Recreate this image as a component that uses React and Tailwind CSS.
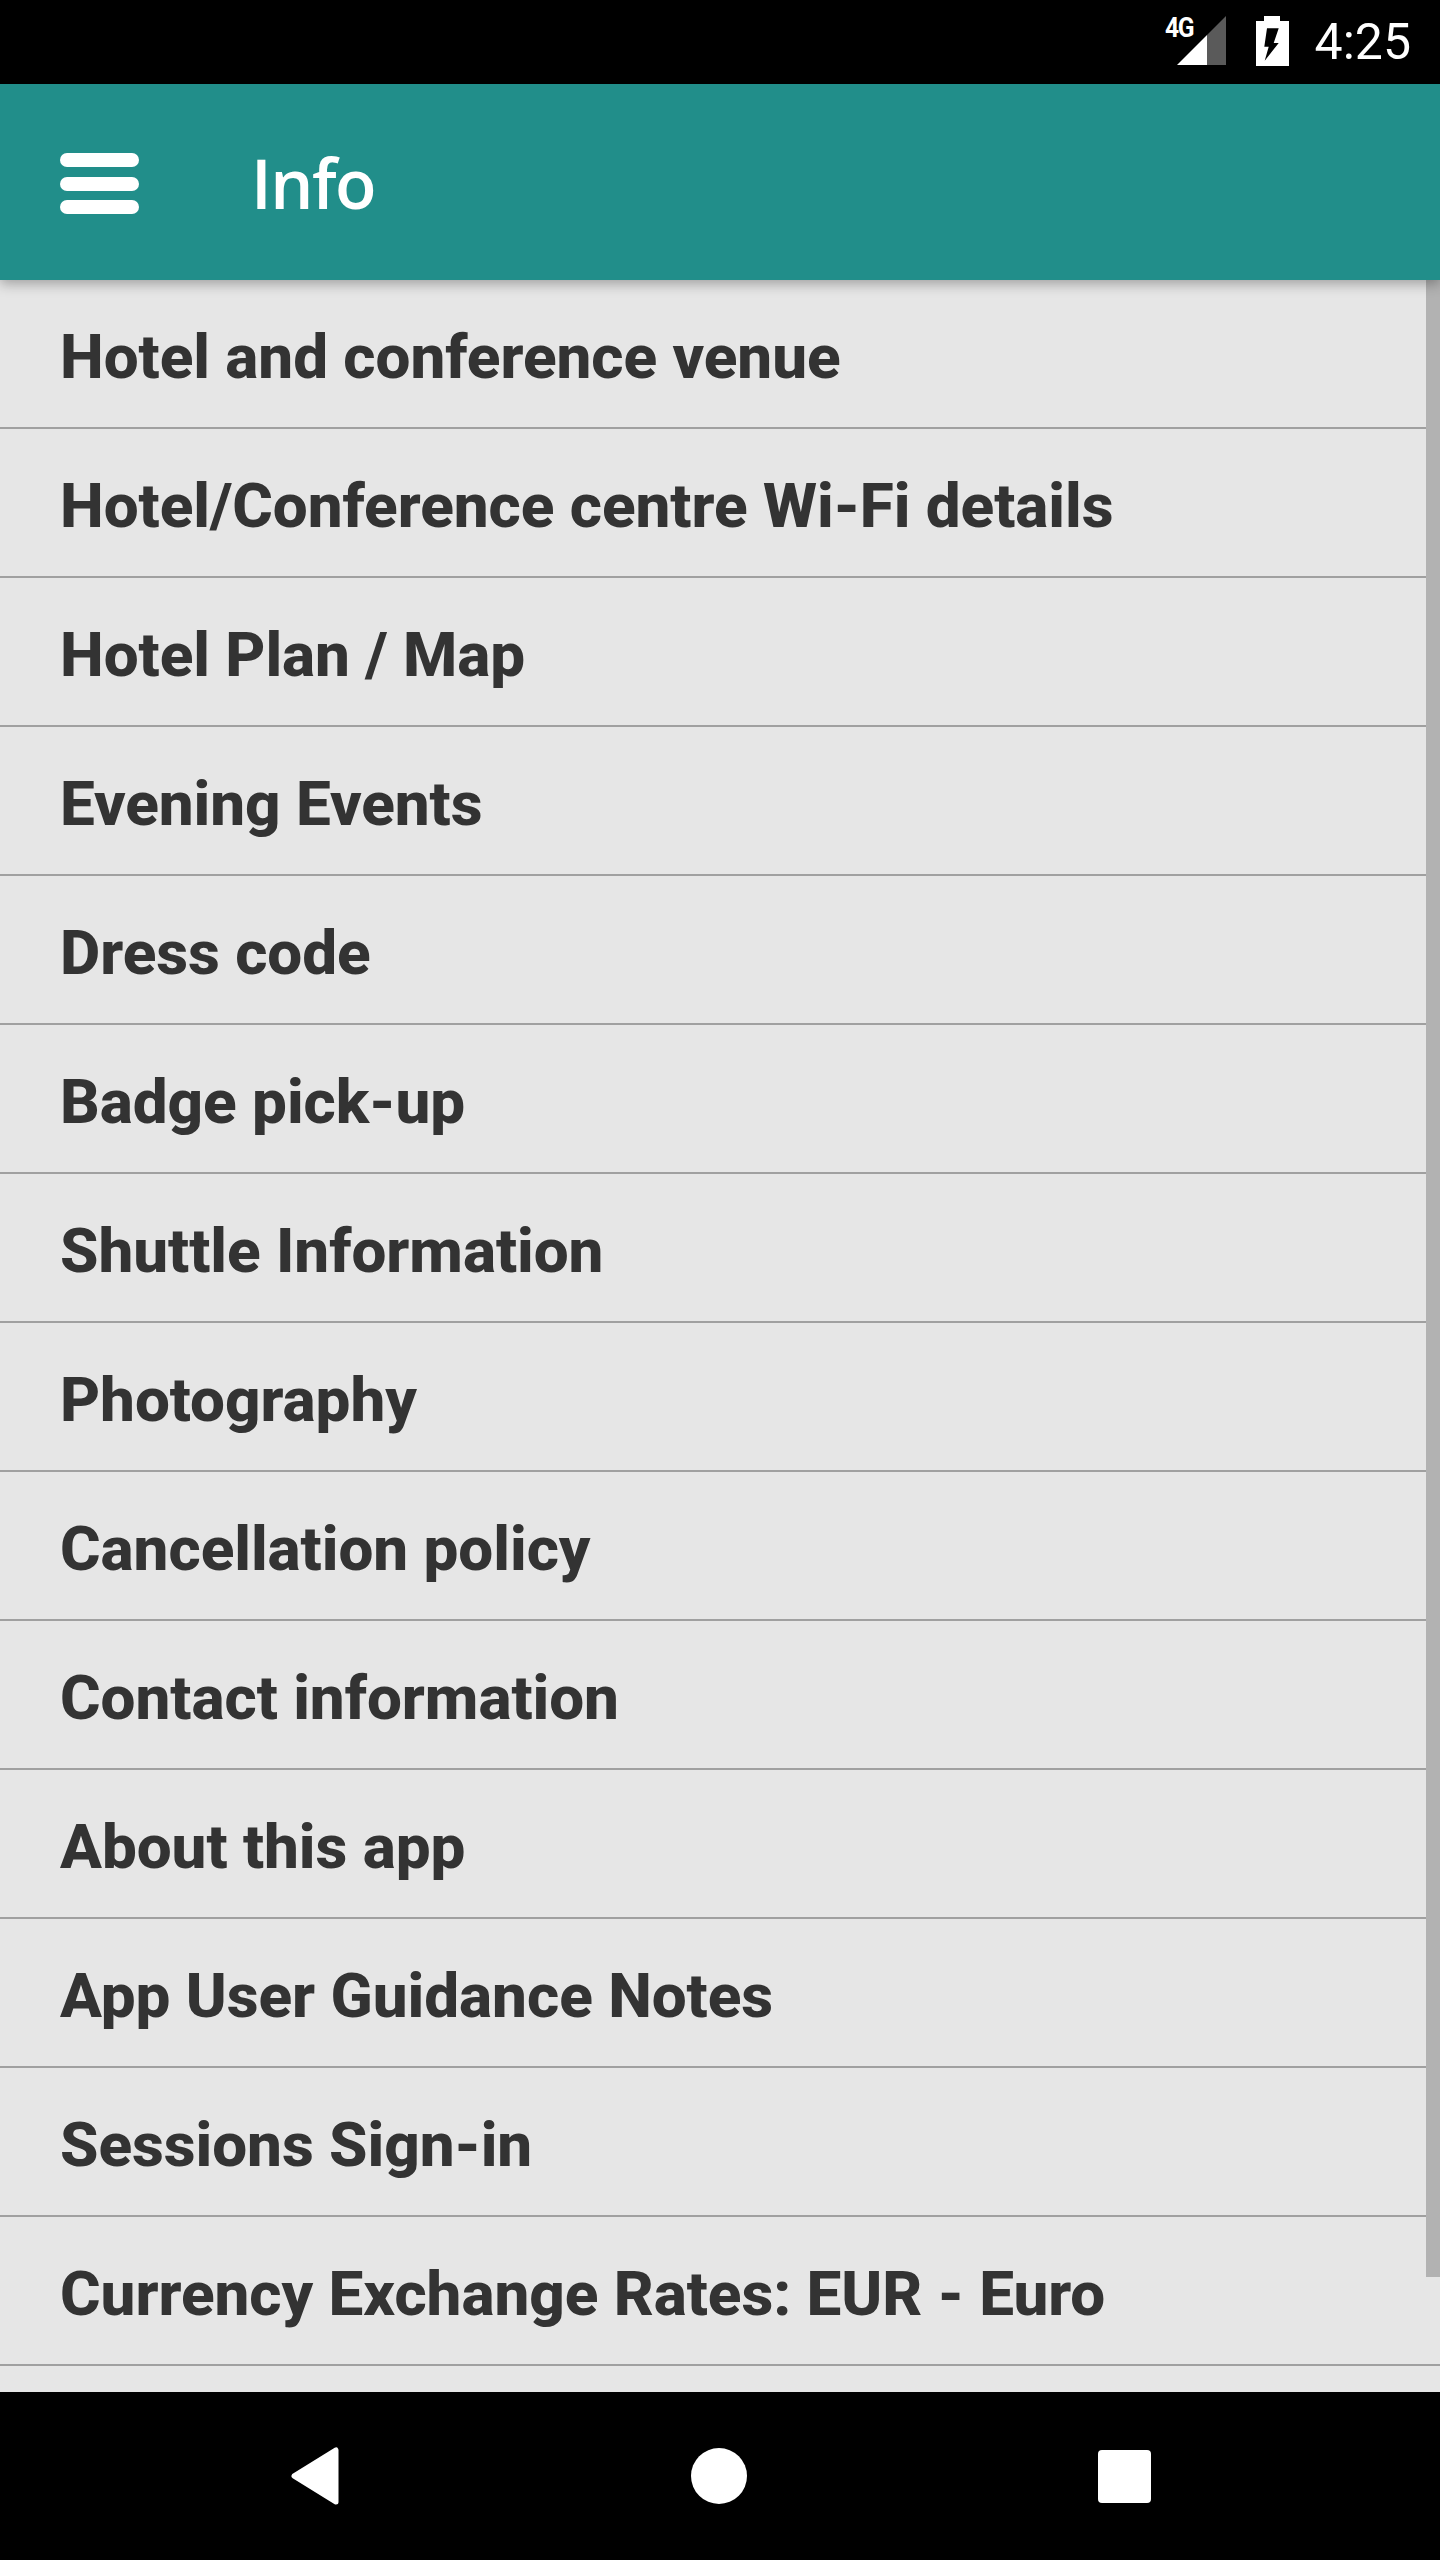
const items = [
  "Hotel and conference venue",
  "Hotel/Conference centre Wi-Fi details",
  "Hotel Plan / Map",
  "Evening Events",
  "Dress code",
  "Badge pick-up",
  "Shuttle Information",
  "Photography",
  "Cancellation policy",
  "Contact information",
  "About this app",
  "App User Guidance Notes",
  "Sessions Sign-in",
  "Currency Exchange Rates: EUR - Euro",
];

const StatusBar = () => (
  <div className="h-[84px] bg-black flex items-center justify-end pr-[29px]">
    <div className="relative w-[61px] h-[50px] mr-[29px] mt-[-2px]">
      <span className="absolute left-[-1px] top-[-3px] text-white text-[28px] font-bold leading-[30px] font-['Roboto',sans-serif] tracking-[-1.5px] origin-left scale-x-[0.88]">4G</span>
      <svg className="absolute right-0 top-0" width="50" height="50" viewBox="0 0 50 50">
        <path d="M49 0V49H30V19Z" fill="#5a5a5a" />
        <path d="M30 19V49H0Z" fill="#ffffff" />
      </svg>
    </div>
    <svg className="mr-[26px] mt-[-2px]" width="33" height="50" viewBox="0 0 33 50">
      <path d="M8 0H24V5H33V50H0V5H8Z" fill="#ffffff" />
      <path d="M11 12.3H22.7L17.7 27H22.7L8.7 44.7L12.7 30.7H8.3Z" fill="#000000" />
    </svg>
    <span className="text-white text-[50px] leading-none font-['Roboto',sans-serif]">4:25</span>
  </div>
);

const Toolbar = () => (
  <div className="h-[196px] bg-[#218e8a] flex items-center pl-[60px] relative z-10 shadow-[0_4px_12px_rgba(0,0,0,0.3)]">
    <div className="w-[79px] flex flex-col gap-[9.5px] mr-[112px] mt-[3px]">
      <div className="h-[14px] rounded-full bg-white" />
      <div className="h-[14px] rounded-full bg-white" />
      <div className="h-[14px] rounded-full bg-white" />
    </div>
    <h1 className="text-white text-[68px] leading-none font-[650] tracking-[-1.5px] mt-[2px] font-['Open_Sans',sans-serif]">Info</h1>
  </div>
);

const NavBar = () => (
  <div className="h-[168px] bg-black flex items-center justify-center gap-[351px]">
    <svg width="50" height="58" viewBox="0 0 50 58">
      <path d="M46 3V55L4 29Z" fill="#ffffff" stroke="#ffffff" strokeWidth="5" strokeLinejoin="round" />
    </svg>
    <div className="w-[56px] h-[56px] rounded-full bg-white" />
    <div className="w-[53px] h-[53px] rounded-[4px] bg-white" />
  </div>
);

export default function App() {
  return (
    <div className="w-[1440px] h-[2560px] flex flex-col bg-[#e6e6e6] overflow-hidden">
      <StatusBar />
      <Toolbar />
      <div className="relative flex-1 overflow-hidden">
        {items.map((item) => (
          <div key={item} className="h-[149px] border-b-2 border-[#a0a0a0] pl-[60px] pt-[7px] flex items-center">
            <span className="text-[#333333] text-[62px] font-extrabold tracking-[-0.05px] font-['Roboto',sans-serif] leading-none">{item}</span>
          </div>
        ))}
        <div className="absolute right-0 top-0 w-[14px] h-[1997px] bg-[#b2b2b2]" />
      </div>
      <NavBar />
    </div>
  );
}
